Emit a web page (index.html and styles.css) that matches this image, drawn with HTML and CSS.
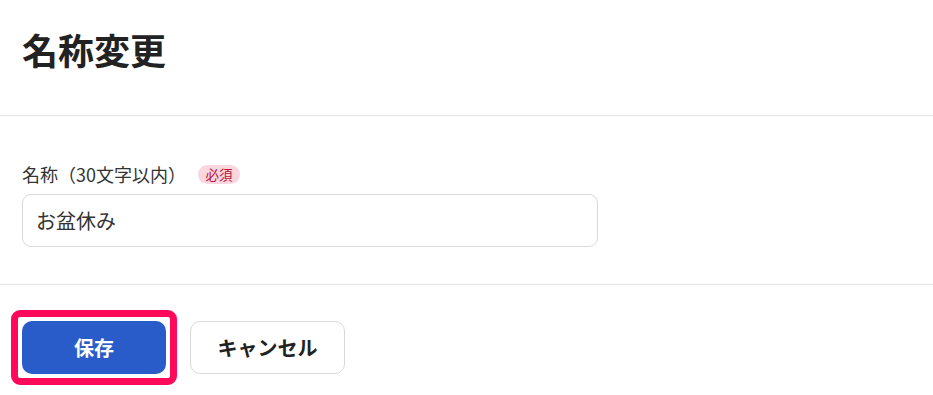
FILE: index.html
```html
<!DOCTYPE html>
<html lang="ja">
<head>
<meta charset="utf-8">
<link rel="stylesheet" href="styles.css">
</head>
<body>
<div class="page">
  <header class="header">
    <h1 class="title">名称変更</h1>
  </header>
  <section class="body">
    <div class="label-row">
      <span class="label">名称（30文字以内）</span>
      <span class="badge">必須</span>
    </div>
    <div class="input">お盆休み</div>
  </section>
  <footer class="footer">
    <div class="highlight">
      <button class="btn btn-primary">保存</button>
    </div>
    <button class="btn btn-secondary">キャンセル</button>
  </footer>
</div>
</body>
</html>
```
FILE: styles.css
```css
* { box-sizing: border-box; }
html, body { margin: 0; padding: 0; background: #fff; }
body {
  font-family: "Noto Sans CJK JP", "Noto Sans", sans-serif;
  color: #222;
  width: 933px;
  height: 395px;
  overflow: hidden;
}
.header {
  height: 116px;
  padding: 31px 22px 0;
  border-bottom: 1px solid #e6e6e6;
}
.title {
  margin: 0;
  font-size: 36px;
  line-height: 36px;
  font-weight: 700;
  color: #222;
}
.body {
  height: 169px;
  padding: 48px 22px 0;
  border-bottom: 1px solid #e6e6e6;
}
.label-row {
  display: flex;
  align-items: center;
  gap: 12px;
  height: 20px;
}
.label {
  font-size: 18px;
  line-height: 20px;
  color: #333;
}
.badge {
  display: inline-flex;
  align-items: center;
  justify-content: center;
  width: 42px;
  height: 19px;
  border-radius: 10px;
  background: #fad7de;
  color: #b8123a;
  font-size: 13.5px;
  line-height: 19px;
}
.input {
  margin-top: 10px;
  width: 576px;
  height: 53px;
  border: 1px solid #d9d9d9;
  border-radius: 9px;
  padding: 0 13px;
  display: flex;
  align-items: center;
  font-size: 20px;
  color: #333;
}
.footer {
  display: flex;
  align-items: center;
  padding: 25px 11px 0;
  gap: 13px;
}
.highlight {
  border: 7px solid #ff0a5a;
  border-radius: 9px;
  padding: 4px;
}
.btn {
  height: 53px;
  border-radius: 10px;
  font-family: inherit;
  font-size: 20px;
  font-weight: 700;
  display: flex;
  align-items: center;
  justify-content: center;
  cursor: pointer;
}
.btn-primary {
  width: 144px;
  background: #295cc9;
  border: none;
  color: #fff;
}
.btn-secondary {
  width: 155px;
  background: #fff;
  border: 1px solid #d9d9d9;
  color: #222;
}
```
